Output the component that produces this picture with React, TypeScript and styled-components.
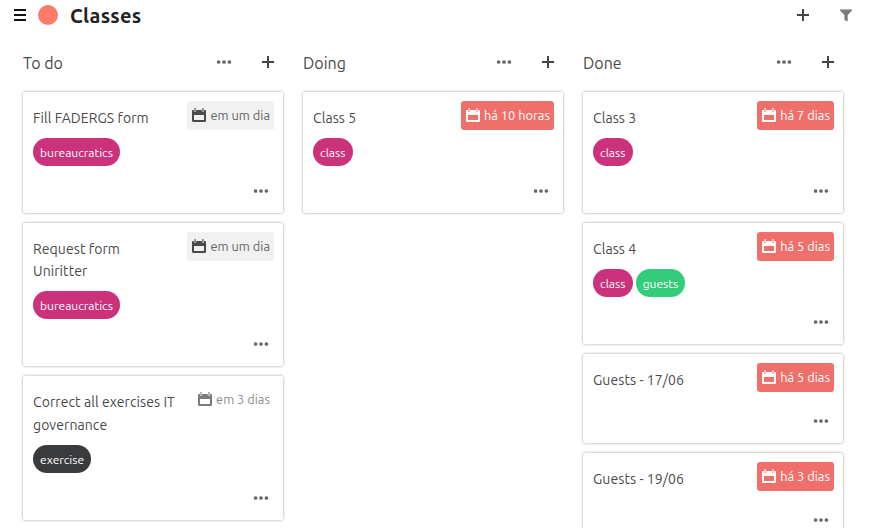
import React from "react";
import styled, { createGlobalStyle } from "styled-components";

const GlobalStyle = createGlobalStyle`
  * { box-sizing: border-box; }
  html, body { margin: 0; height: 100%; overflow: hidden; }
  body {
    background: #fff;
    color: #4a4a4a;
    font-family: Ubuntu, "Noto Sans", "Open Sans", sans-serif;
    font-size: 14px;
  }
`;

type DueTone = "overdue" | "soon" | "later";
type Tag = { name: string; color: string };
type Task = { title: string; due: string; tone: DueTone; tags: Tag[] };
type Column = { name: string; tasks: Task[] };

const PINK = "#cc317c";
const bureaucratics: Tag = { name: "bureaucratics", color: PINK };
const classTag: Tag = { name: "class", color: PINK };
const guests: Tag = { name: "guests", color: "#33cc7a" };
const exercise: Tag = { name: "exercise", color: "#3a3b3c" };

const columns: Column[] = [
  {
    name: "To do",
    tasks: [
      { title: "Fill FADERGS form", due: "em um dia", tone: "soon", tags: [bureaucratics] },
      { title: "Request form Uniritter", due: "em um dia", tone: "soon", tags: [bureaucratics] },
      { title: "Correct all exercises IT governance", due: "em 3 dias", tone: "later", tags: [exercise] },
    ],
  },
  {
    name: "Doing",
    tasks: [{ title: "Class 5", due: "há 10 horas", tone: "overdue", tags: [classTag] }],
  },
  {
    name: "Done",
    tasks: [
      { title: "Class 3", due: "há 7 dias", tone: "overdue", tags: [classTag] },
      { title: "Class 4", due: "há 5 dias", tone: "overdue", tags: [classTag, guests] },
      { title: "Guests - 17/06", due: "há 5 dias", tone: "overdue", tags: [] },
      { title: "Guests - 19/06", due: "há 3 dias", tone: "overdue", tags: [] },
    ],
  },
];

const tones = {
  overdue: { background: "#ef706b", text: "#fff", icon: "#fff" },
  soon: { background: "#f1f1f1", text: "#666", icon: "#4a4a4a" },
  later: { background: "transparent", text: "#8c8c8c", icon: "#7c7c7c" },
};

const Page = styled.div`
  height: 100vh;
  overflow: hidden;
`;

const Header = styled.header`
  display: flex;
  align-items: center;
  height: 30px;
  padding: 0 19px 0 14px;
`;

const ProjectDot = styled.span`
  width: 20px;
  height: 20px;
  margin-left: 12px;
  border-radius: 50%;
  background: #ff7a69;
`;

const ProjectName = styled.h1`
  flex: 1;
  margin: 2px 0 0 12px;
  color: #222;
  font-size: 20px;
  line-height: 28px;
  letter-spacing: 0.25px;
`;

const HeaderActions = styled.div`
  display: flex;
  gap: 31px;
`;

const IconButton = styled.button`
  display: flex;
  padding: 0;
  border: 0;
  background: none;
  color: inherit;
`;

const Board = styled.main`
  display: grid;
  grid-template-columns: repeat(3, 260px);
  gap: 20px;
  padding: 18px 0 0 23px;
`;

const ColumnHeader = styled.div`
  display: flex;
  align-items: center;
  height: 28px;
  margin-bottom: 15.8px;
  padding-right: 9px;
`;

const ColumnName = styled.h2`
  flex: 1;
  margin: 2px 0 0;
  font-size: 16px;
  font-weight: 400;
  line-height: 24px;
`;

const ColumnActions = styled.div`
  display: flex;
  align-items: center;
  gap: 30px;
`;

const CardList = styled.div`
  display: flex;
  flex-direction: column;
  gap: 10px;
`;

const Card = styled.article`
  padding: 8.8px 9px 0 10px;
  border-radius: 2px;
  background: #fff;
  box-shadow: 0 0 3px rgba(0, 0, 0, 0.4);
`;

const CardTop = styled.div`
  display: flex;
  align-items: flex-start;
  justify-content: space-between;
  gap: 12px;
`;

const CardTitle = styled.h3`
  margin: 6.2px 0 4.7px;
  font-size: 14px;
  font-weight: 400;
  line-height: 22.4px;
  letter-spacing: 0.08px;
`;

const DueBadge = styled.span<{ $tone: DueTone }>`
  display: flex;
  flex: none;
  align-items: center;
  gap: 4.35px;
  height: 29px;
  padding: 0 4px 0 5px;
  border-radius: 3px;
  background: ${({ $tone }) => tones[$tone].background};
  color: ${({ $tone }) => tones[$tone].text};
  font-size: 12.8px;
  line-height: 29px;

  svg { color: ${({ $tone }) => tones[$tone].icon}; }
`;

const Tags = styled.div`
  display: flex;
  gap: 3px;
  padding-top: 4px;
`;

const TagPill = styled.span<{ $color: string }>`
  height: 28px;
  padding: 1px 7.1px 0;
  border-radius: 14px;
  background: ${({ $color }) => $color};
  color: #fff;
  font-size: 12px;
  line-height: 28px;
`;

const CardFooter = styled.div`
  display: flex;
  justify-content: flex-end;
  height: 46.9px;
  padding: 23px 5px 0 0;
  color: #666;
`;

const MenuIcon = () => (
  <svg width="12" height="12" viewBox="0 0 12 12" fill="#111">
    <path d="M0 0h12v2H0zM0 5h12v2H0zM0 10h12v2H0z" />
  </svg>
);

const PlusIcon = () => (
  <svg width="12" height="12" viewBox="0 0 12 12" fill="#444">
    <path d="M5 0h2v5h5v2H7v5H5V7H0V5h5z" />
  </svg>
);

const FilterIcon = () => (
  <svg width="12" height="13" viewBox="0 0 12 13">
    <path d="M0 .3h12v1.2L7.7 6v6.6L4.4 11V6L0 1.5z" fill="#7b7b7b" />
    <path d="M0 .3h12v.8H0z" fill="#bbb" />
  </svg>
);

const DotsIcon = () => (
  <svg width="16" height="4" viewBox="0 0 16 4" fill="#666">
    <circle cx="2.6" cy="2" r="1.85" />
    <circle cx="8" cy="2" r="1.85" />
    <circle cx="13.4" cy="2" r="1.85" />
  </svg>
);

const CalendarIcon = () => (
  <svg width="14" height="14" viewBox="0 0 14 14" fill="currentColor">
    <path
      fillRule="evenodd"
      d="M1 2h1v1.2a1.2 1.2 0 0 0 2.2 0V2h5.6v1.2a1.2 1.2 0 0 0 2.2 0V2h1a1 1 0 0 1 1 1v9.5A1.5 1.5 0 0 1 12.5 14h-11A1.5 1.5 0 0 1 0 12.5V3a1 1 0 0 1 1-1zM2 7v5h10V7z"
    />
    <rect x="2.4" y="0" width="1.4" height="3.5" rx=".5" opacity=".8" />
    <rect x="10.2" y="0" width="1.4" height="3.5" rx=".5" opacity=".8" />
  </svg>
);

const TaskCard = ({ task }: { task: Task }) => (
  <Card>
    <CardTop>
      <CardTitle>{task.title}</CardTitle>
      <DueBadge $tone={task.tone}>
        <CalendarIcon />
        {task.due}
      </DueBadge>
    </CardTop>
    {task.tags.length > 0 && (
      <Tags>
        {task.tags.map((tag) => (
          <TagPill key={tag.name} $color={tag.color}>
            {tag.name}
          </TagPill>
        ))}
      </Tags>
    )}
    <CardFooter>
      <IconButton aria-label="Task options">
        <DotsIcon />
      </IconButton>
    </CardFooter>
  </Card>
);

export default function App() {
  return (
    <Page>
      <GlobalStyle />
      <Header>
        <IconButton aria-label="Menu">
          <MenuIcon />
        </IconButton>
        <ProjectDot />
        <ProjectName>Classes</ProjectName>
        <HeaderActions>
          <IconButton aria-label="Add column">
            <PlusIcon />
          </IconButton>
          <IconButton aria-label="Filter">
            <FilterIcon />
          </IconButton>
        </HeaderActions>
      </Header>
      <Board>
        {columns.map((column) => (
          <section key={column.name}>
            <ColumnHeader>
              <ColumnName>{column.name}</ColumnName>
              <ColumnActions>
                <IconButton aria-label="Column options">
                  <DotsIcon />
                </IconButton>
                <IconButton aria-label="Add task">
                  <PlusIcon />
                </IconButton>
              </ColumnActions>
            </ColumnHeader>
            <CardList>
              {column.tasks.map((task) => (
                <TaskCard key={task.title} task={task} />
              ))}
            </CardList>
          </section>
        ))}
      </Board>
    </Page>
  );
}
